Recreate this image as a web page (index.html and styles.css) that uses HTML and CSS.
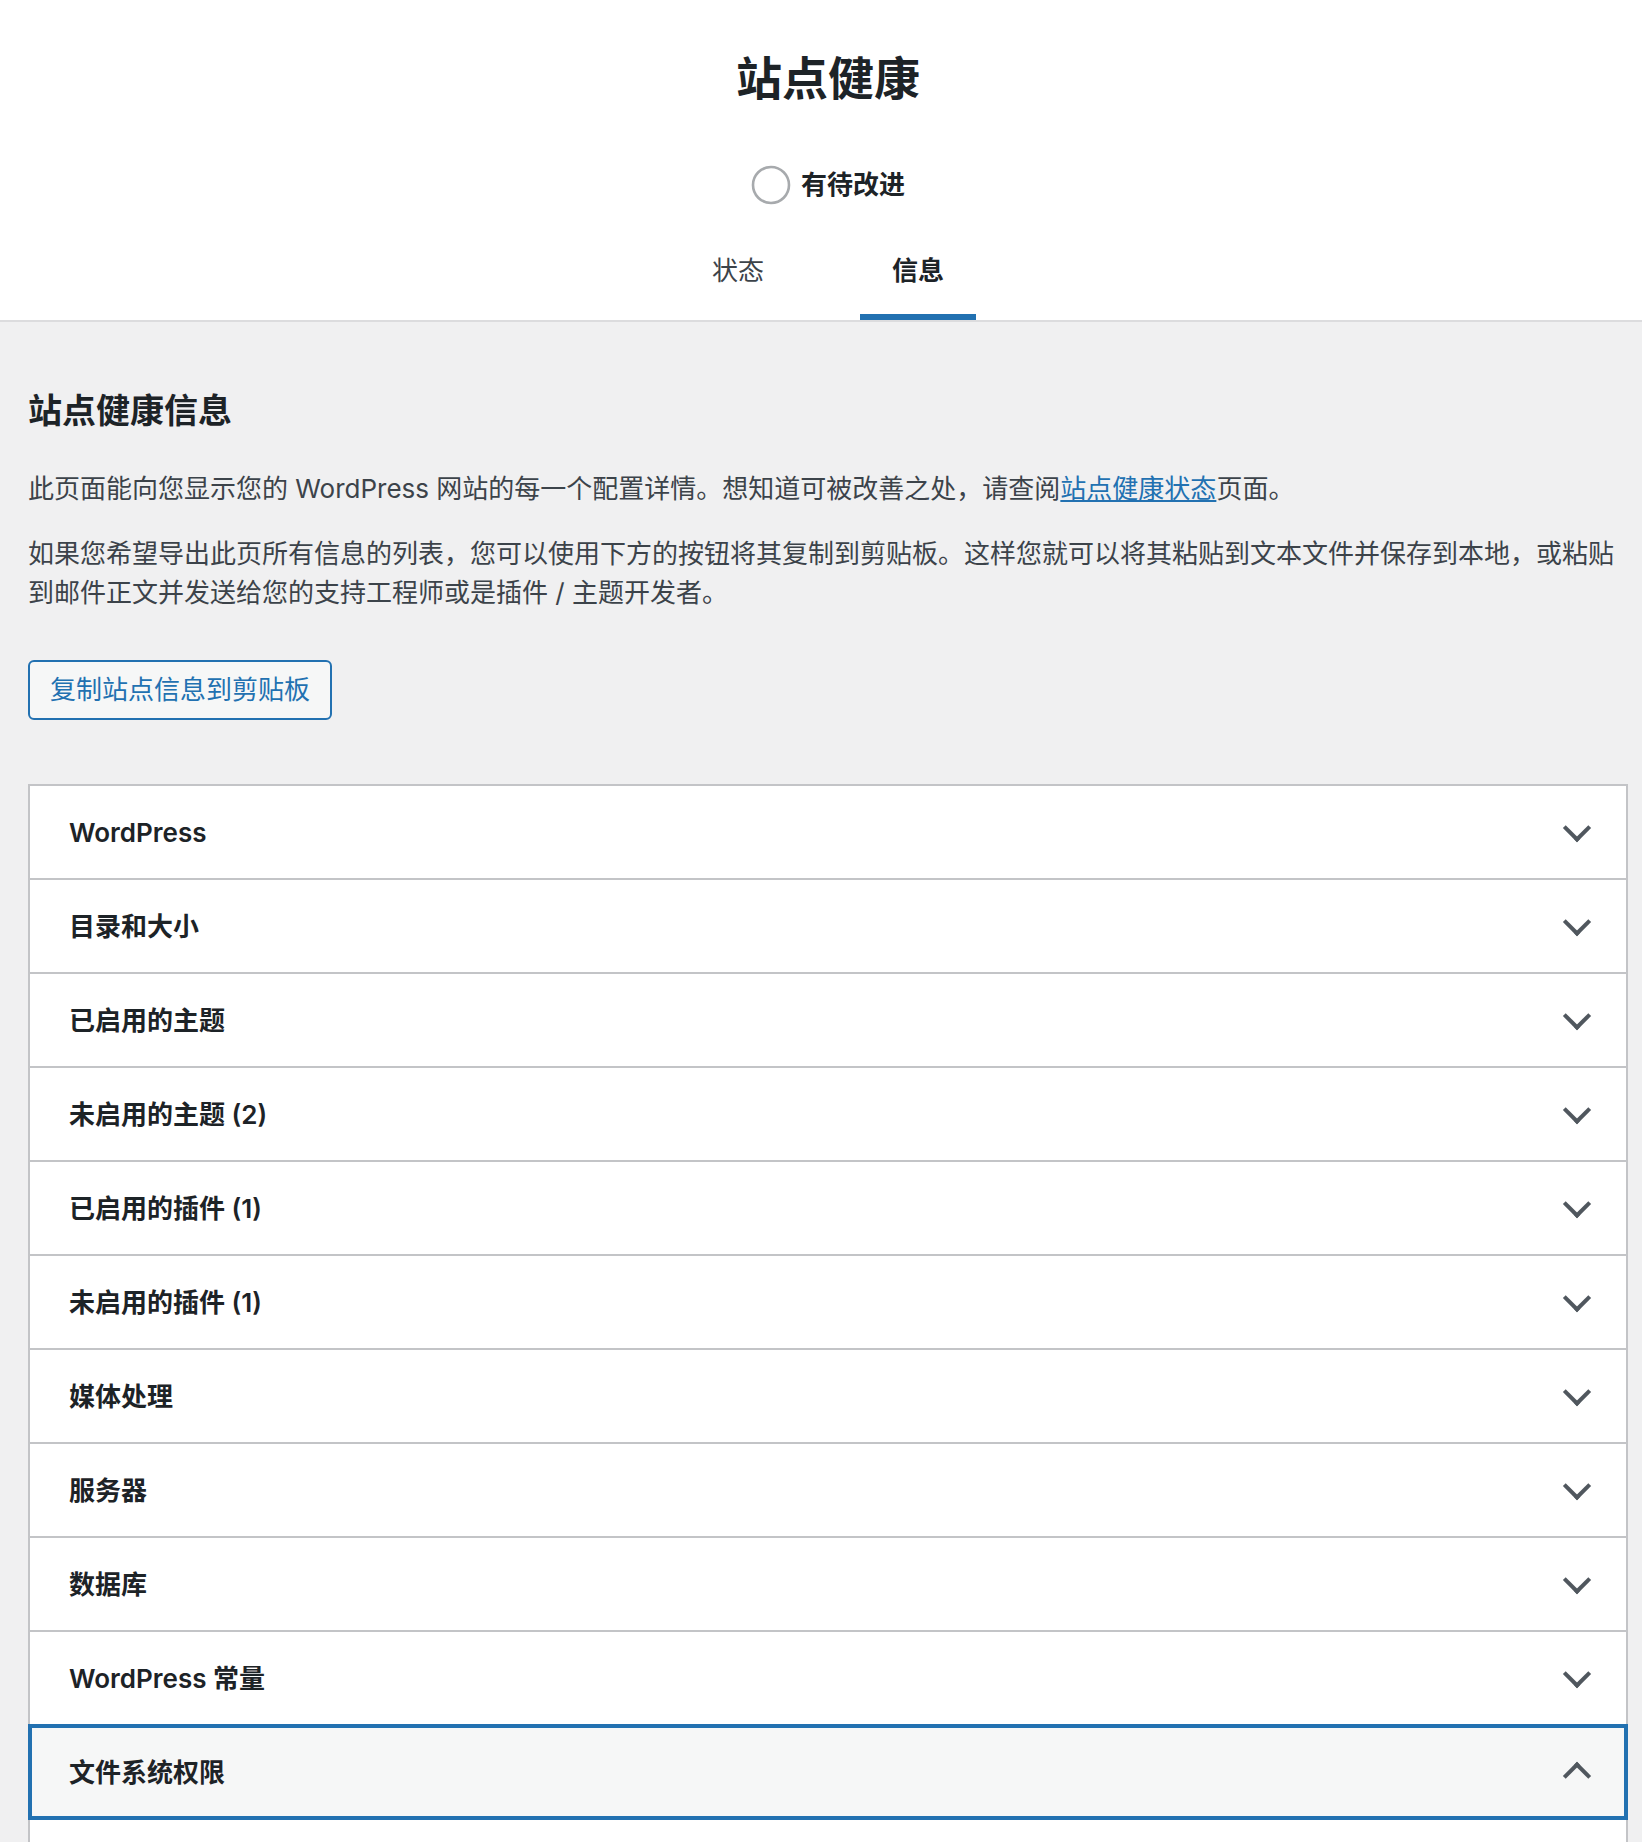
FILE: index.html
```html
<!DOCTYPE html>
<html lang="zh-CN">
<head>
<meta charset="utf-8">
<title>站点健康</title>
<link rel="stylesheet" href="styles.css">
</head>
<body>
<div class="page">
  <header class="hc-header">
    <h1 class="hc-title">站点健康</h1>
    <div class="progress-wrapper">
      <svg class="progress-ring" viewBox="0 0 200 200" aria-hidden="true">
        <circle cx="100" cy="100" r="90" fill="none" stroke="#a7aaad" stroke-width="13"></circle>
      </svg>
      <span class="progress-label">有待改进</span>
    </div>
    <nav class="tabs">
      <a class="tab" href="#">状态</a>
      <a class="tab active" href="#">信息</a>
    </nav>
  </header>

  <div class="hc-wrap">
    <main class="hc-body">
      <h2 class="section-title">站点健康信息</h2>
      <p class="intro">此页面能向您显示您的 WordPress 网站的每一个配置详情。想知道可被改善之处，请查阅<a class="link" href="#">站点健康状态</a>页面。</p>
      <p class="intro intro-second">如果您希望导出此页所有信息的列表，您可以使用下方的按钮将其复制到剪贴板。这样您就可以将其粘贴到文本文件并保存到本地，或粘贴到邮件正文并发送给您的支持工程师或是插件 / 主题开发者。</p>

      <div class="copy-buttons">
        <button class="copy-button" type="button">复制站点信息到剪贴板</button>
      </div>

      <div class="accordion">
        <h3 class="acc-heading"><button class="acc-trigger" type="button"><span class="acc-title">WordPress</span><span class="acc-icon"></span></button></h3>
        <h3 class="acc-heading"><button class="acc-trigger" type="button"><span class="acc-title">目录和大小</span><span class="acc-icon"></span></button></h3>
        <h3 class="acc-heading"><button class="acc-trigger" type="button"><span class="acc-title">已启用的主题</span><span class="acc-icon"></span></button></h3>
        <h3 class="acc-heading"><button class="acc-trigger" type="button"><span class="acc-title">未启用的主题 (2)</span><span class="acc-icon"></span></button></h3>
        <h3 class="acc-heading"><button class="acc-trigger" type="button"><span class="acc-title">已启用的插件 (1)</span><span class="acc-icon"></span></button></h3>
        <h3 class="acc-heading"><button class="acc-trigger" type="button"><span class="acc-title">未启用的插件 (1)</span><span class="acc-icon"></span></button></h3>
        <h3 class="acc-heading"><button class="acc-trigger" type="button"><span class="acc-title">媒体处理</span><span class="acc-icon"></span></button></h3>
        <h3 class="acc-heading"><button class="acc-trigger" type="button"><span class="acc-title">服务器</span><span class="acc-icon"></span></button></h3>
        <h3 class="acc-heading"><button class="acc-trigger" type="button"><span class="acc-title">数据库</span><span class="acc-icon"></span></button></h3>
        <h3 class="acc-heading"><button class="acc-trigger" type="button"><span class="acc-title">WordPress 常量</span><span class="acc-icon"></span></button></h3>
        <h3 class="acc-heading"><button class="acc-trigger is-open" type="button" aria-expanded="true"><span class="acc-title">文件系统权限</span><span class="acc-icon"></span></button></h3>
        <div class="acc-panel"></div>
      </div>
    </main>
  </div>
</div>
</body>
</html>
```

FILE: styles.css
```css
* {
  box-sizing: border-box;
}

html,
body {
  margin: 0;
  padding: 0;
}

body {
  background: #f0f0f1;
  color: #3c434a;
  font-family: Inter, "Noto Sans CJK SC", "Noto Sans", sans-serif;
  font-size: 26px;
  line-height: 39px;
}

.page {
  height: 100vh;
  overflow: hidden;
}

/* ---------- header ---------- */
.hc-header {
  background: #fff;
  border-bottom: 2px solid #dcdcde;
  padding: 48px 0 0 14px;
  text-align: center;
  color: #1d2327;
}

.hc-title {
  margin: 0 0 57px;
  font-size: 46px;
  line-height: 60px;
  font-weight: 600;
  color: #1d2327;
}

.progress-wrapper {
  display: flex;
  justify-content: center;
  align-items: center;
  height: 40px;
  margin-bottom: 32px;
}

.progress-ring {
  display: block;
  width: 40px;
  height: 40px;
  flex: none;
}

.progress-label {
  margin-left: 10px;
  font-weight: 600;
  font-size: 26px;
  line-height: 40px;
  color: #1d2327;
}

.tabs {
  display: grid;
  grid-template-columns: 1fr 1fr;
  width: max-content;
  margin: 0 auto;
}

.tab {
  display: block;
  padding: 16px 32px 31px;
  margin: 0 32px;
  font-size: 26px;
  line-height: 36px;
  color: #3c434a;
  text-decoration: none;
}

.tab.active {
  box-shadow: inset 0 -6px #2271b1;
  font-weight: 600;
  color: #1d2327;
}

/* ---------- body ---------- */
.hc-wrap {
  padding-left: 14px;
}

.hc-body {
  max-width: 1600px;
  margin: 0 auto;
}

.section-title {
  margin: 65px 0 35px;
  font-size: 34px;
  line-height: 47px;
  font-weight: 600;
  color: #1d2327;
}

.intro {
  margin: 0;
  font-size: 26px;
  line-height: 39px;
}

.intro-second {
  margin-top: 26px;
}

.link {
  color: #2271b1;
  text-decoration: underline;
}

.copy-buttons {
  display: flex;
  margin: 48px 0 64px;
}

.copy-button {
  min-height: 60px;
  padding: 0 20px;
  border: 2px solid #2271b1;
  border-radius: 6px;
  background: #f6f7f7;
  color: #2271b1;
  font-family: inherit;
  font-size: 26px;
  line-height: 56px;
  cursor: pointer;
}

/* ---------- accordion ---------- */
.accordion {
  border: 2px solid #c3c4c7;
  background: #fff;
}

.acc-heading {
  margin: 0;
  border-top: 2px solid #c3c4c7;
}

.acc-heading:first-child {
  border-top: none;
}

.acc-trigger {
  display: flex;
  align-items: center;
  justify-content: space-between;
  width: 100%;
  min-height: 92px;
  padding: 0 39px;
  background: #fff;
  border: 0;
  color: #1d2327;
  font-family: inherit;
  font-size: 26px;
  font-weight: 600;
  line-height: 39px;
  text-align: left;
  cursor: pointer;
}

.acc-trigger.is-open {
  background: #f6f7f7;
  outline: 4px solid #2271b1;
  outline-offset: -2px;
}

.acc-icon {
  flex: none;
  width: 20px;
  height: 20px;
  border: solid #50575e;
  border-width: 0 4px 4px 0;
  transform: translateY(-4px) rotate(45deg);
}

.acc-trigger.is-open .acc-icon {
  transform: translateY(4px) rotate(-135deg);
}

.acc-panel {
  min-height: 200px;
  background: #fff;
}
```
